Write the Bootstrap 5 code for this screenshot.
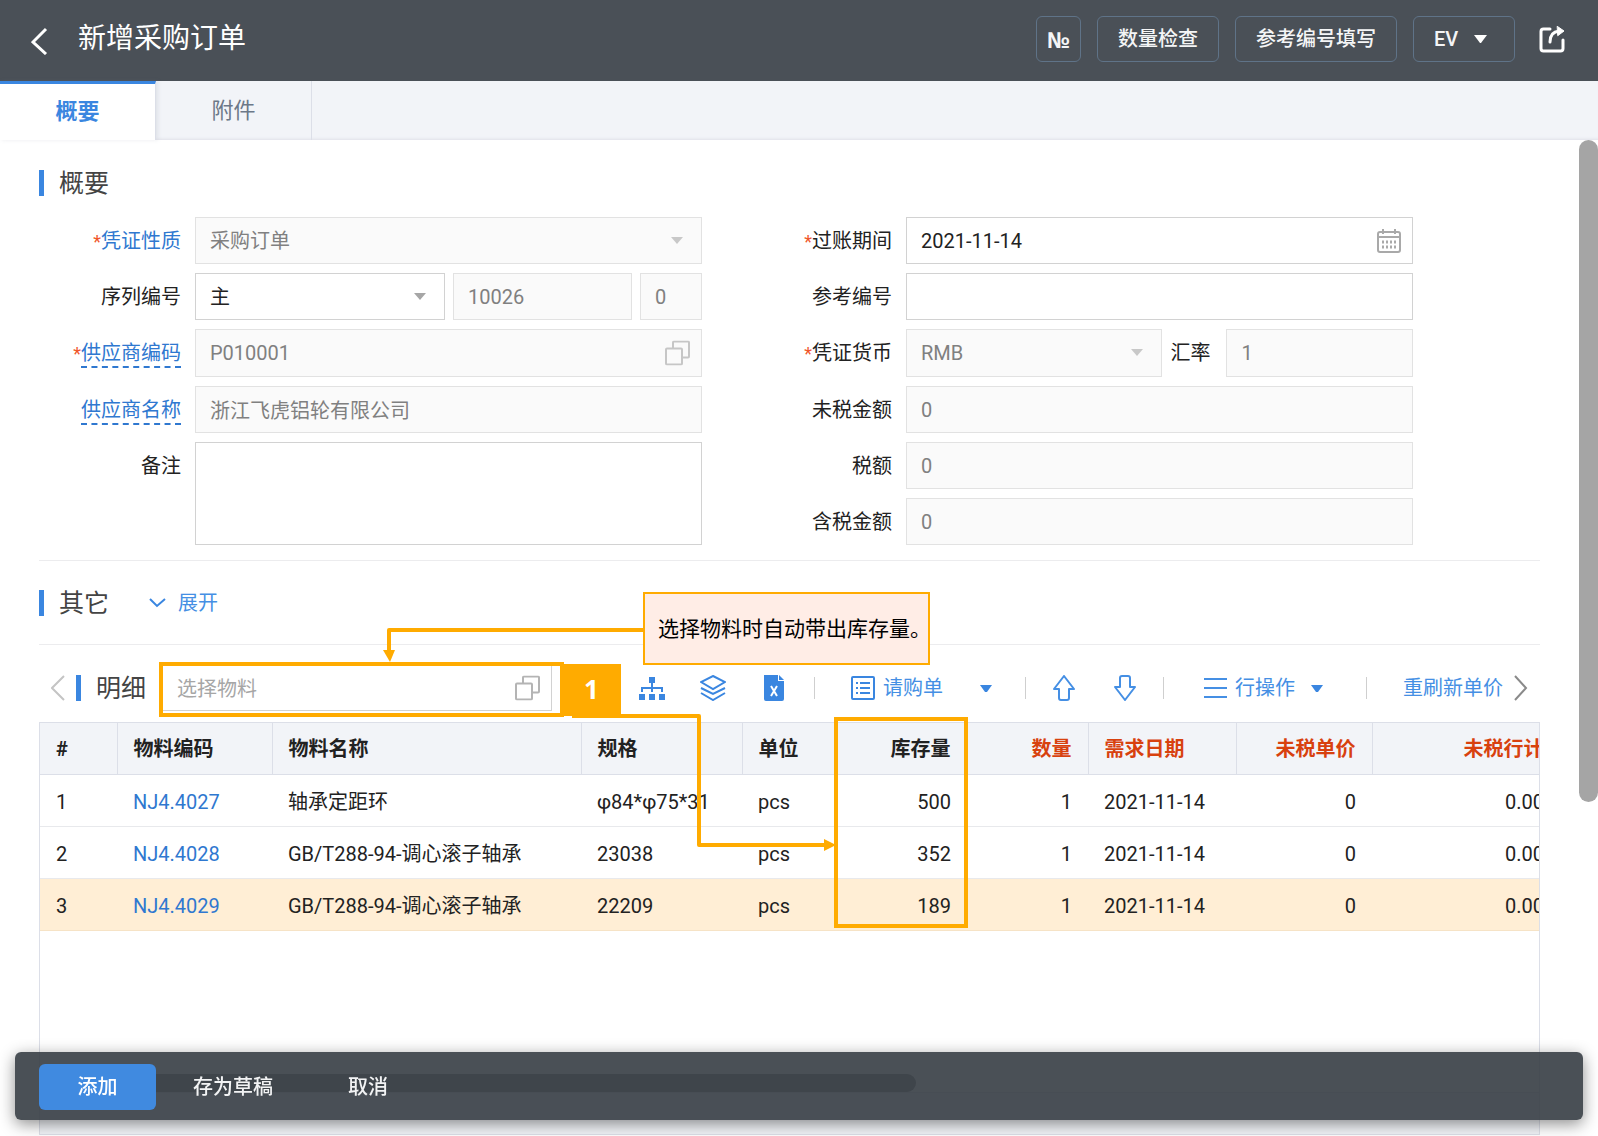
<!DOCTYPE html>
<html lang="zh-CN">
<head>
<meta charset="utf-8">
<meta name="viewport" content="width=device-width, initial-scale=1">
<title>新增采购订单</title>
<link href="https://cdn.jsdelivr.net/npm/bootstrap@5.3.0/dist/css/bootstrap.min.css" rel="stylesheet">
<style>
  :root { --blue: #3a86e0; --link: #2f78d0; --line: #dcdfe8; --note: #ffab00; }
  body { font-family: Roboto, "Noto Sans CJK SC", sans-serif; font-size: 20px; line-height: 28px; color: #222; background: #fff; }
  svg { display: block; flex: none; fill: none; }

  /* header */
  .app-head { height: 81px; background: #4a5057; padding: 0 33px 0 31px; color: #fff; }
  .app-title { font-size: 28px; line-height: 36px; font-weight: 400; margin: 0 0 0 30px; }
  .head-actions { gap: 16px; }
  .head-btn { height: 46px; padding: 0 20px; font-size: 20px; line-height: 28px; font-weight: 500; color: #f4f5f6; border: 1px solid #5f7388; border-radius: 6px; background: transparent; }
  .head-no { width: 45px; padding: 0; font: 700 22px/28px "Open Sans", "Noto Sans", sans-serif; }
  .head-user { width: 102px; }
  .plain { border: 0; background: none; padding: 0; color: inherit; }

  /* tabs */
  .page-tabs { height: 59px; background: #f2f4f8; box-shadow: inset 0 -3px 3px -2px #dfe1e8; flex-wrap: nowrap; border: 0; }
  .page-tabs .nav-link { width: 156px; height: 59px; padding: 0; border: 0; border-right: 1px solid var(--line); border-radius: 0; font-size: 22px; line-height: 60px; text-align: center; color: #6c7888; }
  .page-tabs .nav-link.active { color: var(--blue); background: #fff; border-top: 3px solid var(--blue); line-height: 56px; font-weight: 700; box-shadow: 2px 0 4px rgba(120, 130, 150, .15); }

  /* page body */
  .page-body { min-height: 0; }
  .panel-col { padding: 0 39px 1px; min-width: 0; }
  .rail { width: 19px; flex: none; }
  .rail-thumb { height: 662px; border-radius: 10px; background: #a5a5a5; }
  .sect { border-bottom: 1px solid #ececee; }
  .sect-main { padding: 30px 0 15px; }
  .sect-other { padding: 29px 0 28px; }
  .sect-title { font-size: 25px; line-height: 28px; height: 26px; font-weight: 400; margin: 0; color: #444; display: flex; }
  .sect-title::before { content: ""; width: 5px; height: 26px; margin-right: 15px; background: var(--blue); }
  .expand { color: #458fe4; text-decoration: none; line-height: 28px; margin: -1px 0 -1px 40px; }

  /* form */
  .form-area { margin-top: 21px; padding-right: 127px; }
  .form-side { display: grid; grid-template-rows: repeat(6, 1fr); row-gap: 9px; height: 328px; flex: 1 1 663px; min-width: 0; }
  .form-side.right { flex-basis: 711px; }
  .form-side .item { display: flex; min-height: 0; }
  .form-side .tall { grid-row: span 2; }
  .form-side .item > label { width: 156px; flex: none; padding: 10px 14px 0 0; text-align: right; }
  .form-side.right .item > label { width: 204px; }
  .req::before { content: "*"; color: #f0562b; font-size: 18px; }
  .lk { color: var(--link); }
  .dash { border-bottom: 2px dashed var(--link); display: inline-block; line-height: 25px; }
  .form-control, .form-select { height: 100%; padding: 1px 14px 0; font-size: 20px; line-height: 28px; border: 1px solid #d2d2d2; border-radius: 0; color: #222; background-color: #fff; min-width: 0; }
  .form-select { --bs-form-select-bg-img: url("data:image/svg+xml,%3csvg xmlns='http://www.w3.org/2000/svg' viewBox='0 0 12 7'%3e%3cpath fill='%23a6a6a6' d='M0 0h12L6 7z'/%3e%3c/svg%3e"); background-size: 12px 7px; background-position: right 18px center; }
  .form-control:disabled, .form-select:disabled { background-color: #fafafa; border-color: #e2e2e2; color: #808080; opacity: 1; }
  .form-select:disabled { --bs-form-select-bg-img: url("data:image/svg+xml,%3csvg xmlns='http://www.w3.org/2000/svg' viewBox='0 0 12 7'%3e%3cpath fill='%23c8c8c8' d='M0 0h12L6 7z'/%3e%3c/svg%3e"); }
  textarea.form-control { resize: none; }
  .w-serial { flex: 1 1 250px; } .w-number { flex: 1 1 179px; } .w-index { flex: 1 1 62px; }
  .w-money { flex: 1 1 257px; } .w-rate { flex: 1 1 187px; }
  .in-icon { position: absolute; right: 12px; top: 50%; transform: translateY(-50%); }

  /* detail toolbar */
  .detail { position: relative; min-height: 0; }
  .tools { padding: 20px 12px 11px; color: #458fe4; white-space: nowrap; }
  .tools .sect-title { margin-left: 11px; }
  .pick { position: relative; width: 390px; height: 46px; margin-left: 16px; flex: none; }
  .pick .form-control::placeholder { color: #a6a6a6; }
  .icon-set { gap: 35px; margin-left: 87px; }
  .arrow-set { gap: 39px; }
  .tool-sep { width: 1px; height: 22px; background: #cfcfcf; flex: none; margin: 0 27px; }
  .tool-btn { display: flex; align-items: center; gap: 8px; padding: 0 6px 0 9px; flex: none; }
  .tool-btn .far { margin-left: 29px; }
  .tool-btn .near { margin-left: 8px; }

  /* table */
  .grid-box { border: 1px solid var(--line); min-height: 0; overflow: hidden; }
  .grid-table { table-layout: fixed; width: 1520px; margin: 0; --bs-table-bg: transparent; --bs-table-color: #222; }
  .grid-table th, .grid-table td { height: 52px; padding: 3px 16px 0; vertical-align: middle; border-bottom: 1px solid #e8e9ec; white-space: nowrap; }
  .grid-table th { background: #f2f4f8; border-right: 1px solid var(--line); border-bottom-color: var(--line); color: #222; height: 51px; padding-top: 2px; }
  .grid-table .hot { color: #d8410e; }
  .grid-table .sel td { background: #ffeed5; border-bottom-color: #f6e3c6; }
  .grid-table a { color: var(--link); text-decoration: none; }
  .h-thumb { width: 876px; height: 18px; border-radius: 9px; background: #8c8c8c; }
  .grid-foot { height: 42px; background: #f2f4f8; border-top: 1px solid var(--line); }

  /* action bar */
  .act-bar { position: fixed; left: 15px; right: 15px; bottom: 16px; height: 68px; padding: 1px 24px 0; border-radius: 6px; background: rgba(54, 61, 68, .9); box-shadow: 0 4px 16px rgba(0, 0, 0, .45); color: #f2f3f4; font-weight: 500; }
  .act-bar .btn-primary { width: 117px; height: 46px; font-size: 20px; line-height: 28px; border-radius: 6px; border: 0; background: #408ae0; padding: 0; font-weight: 500; }
  .act-bar .act-draft { width: 154px; font-weight: 500; }
  .act-bar .act-cancel { width: 116px; font-weight: 500; }

  /* annotations over the detail area */
  .note-layer { position: absolute; left: 0; top: 0; pointer-events: none; }
  .note-frame { position: absolute; border: 4px solid var(--note); }
  .frame-pick { left: 120px; top: 17px; width: 405px; height: 55px; }
  .frame-stock { left: 795px; top: 72px; width: 134px; height: 211px; }
  .note-num { position: absolute; left: 523px; top: 19px; width: 59px; height: 52px; background: var(--note); color: #fff; font: 700 26px/50px "Open Sans", sans-serif; text-align: center; }
  .note-tip { position: absolute; left: 604px; top: -53px; width: 287px; height: 73px; padding: 0 13px; border: 2px solid var(--note); background: #ffede6; color: #000; font-size: 21px; line-height: 71px; white-space: nowrap; }
  .note-lines { position: absolute; left: 343px; top: -20px; }
</style>
</head>
<body class="d-flex flex-column vh-100 overflow-hidden">

<header class="app-head d-flex align-items-center">
  <button class="plain" type="button" aria-label="返回"><svg width="17" height="28" viewBox="0 0 17 28" stroke="#fff" stroke-width="3"><path d="M15 2 2 15l13 12"/></svg></button>
  <h1 class="app-title mb-1">新增采购订单</h1>
  <div class="head-actions d-flex align-items-center ms-auto mb-1">
    <button class="head-btn head-no" type="button">№</button>
    <button class="head-btn" type="button">数量检查</button>
    <button class="head-btn" type="button">参考编号填写</button>
    <button class="head-btn head-user d-flex align-items-center" type="button">EV<svg class="ms-3" width="13" height="8"><path d="M0 0h13L7 8H6z" fill="#fff"/></svg></button>
    <button class="plain ms-2" type="button" aria-label="分享"><svg width="26" height="28" viewBox="0 0 26 28" stroke="#fff" stroke-width="3" stroke-linecap="round"><path d="M11 4H4.500Q2 4 2 6.500v17Q2 26 4.500 26h17q2.500 0 2.500-2.500V15"/><path d="M11 17q0-10 9-11"/><path d="M18.500 1.500 25 6l-6 4.500z" fill="#fff" stroke-width="1"/></svg></button>
  </div>
</header>

<nav class="nav page-tabs">
  <a class="nav-link active" href="#">概要</a>
  <a class="nav-link" href="#">附件</a>
</nav>

<main class="page-body d-flex flex-grow-1">
  <div class="panel-col d-flex flex-column flex-grow-1">

    <section class="sect sect-main">
      <h2 class="sect-title">概要</h2>
      <div class="form-area d-flex">
        <div class="form-side">
          <div class="item"><label for="kind" class="req lk">凭证性质</label><select id="kind" class="form-select" disabled><option>采购订单</option></select></div>
          <div class="item"><label for="serial">序列编号</label>
            <div class="d-flex gap-2 flex-grow-1">
              <select id="serial" class="form-select w-serial"><option>主</option></select>
              <input class="form-control w-number" value="10026" aria-label="编号" disabled>
              <input class="form-control w-index" value="0" aria-label="子号" disabled>
            </div>
          </div>
          <div class="item"><label for="vcode" class="req lk"><span class="dash">供应商编码</span></label>
            <div class="position-relative flex-grow-1"><input id="vcode" class="form-control" value="P010001" disabled>
              <svg class="in-icon" width="25" height="25" stroke="#c6c6c6" stroke-width="2"><rect x="1" y="8" width="16" height="16" rx="1"/><path d="M8 8V2q0-1 1-1h14q1 0 1 1v14q0 1-1 1h-6"/></svg></div>
          </div>
          <div class="item"><label for="vname" class="lk"><span class="dash">供应商名称</span></label><input id="vname" class="form-control" value="浙江飞虎铝轮有限公司" disabled></div>
          <div class="item tall"><label for="memo">备注</label><textarea id="memo" class="form-control"></textarea></div>
        </div>
        <div class="form-side right">
          <div class="item"><label for="period" class="req">过账期间</label>
            <div class="position-relative flex-grow-1"><input id="period" class="form-control" value="2021-11-14">
              <svg class="in-icon" width="24" height="24" stroke="#a9a9a9" stroke-width="2"><rect x="1" y="3" width="22" height="20" rx="2"/><path d="M1 8h22M6 0v5M18 0v5"/><path d="M5 13h14M5 18h14" stroke-width="3" stroke-dasharray="2 2"/></svg></div>
          </div>
          <div class="item"><label for="refno">参考编号</label><input id="refno" class="form-control"></div>
          <div class="item"><label for="money" class="req">凭证货币</label>
            <div class="d-flex flex-grow-1">
              <select id="money" class="form-select w-money" disabled><option>RMB</option></select>
              <label for="rate" class="flex-shrink-0 ps-2 pe-3 align-self-center">汇率</label>
              <input id="rate" class="form-control w-rate" value="1" disabled>
            </div>
          </div>
          <div class="item"><label for="net">未税金额</label><input id="net" class="form-control" value="0" disabled></div>
          <div class="item"><label for="tax">税额</label><input id="tax" class="form-control" value="0" disabled></div>
          <div class="item"><label for="gross">含税金额</label><input id="gross" class="form-control" value="0" disabled></div>
        </div>
      </div>
    </section>

    <section class="sect sect-other d-flex align-items-center">
      <h2 class="sect-title">其它</h2>
      <a href="#" class="expand d-flex align-items-center gap-2"><svg class="me-1" width="17" height="10" stroke="#3a86e0" stroke-width="2"><path d="M1 1l7 7 8-7"/></svg>展开</a>
    </section>

    <section class="detail d-flex flex-column flex-grow-1">
      <div class="tools d-flex align-items-center">
        <button class="plain" type="button" aria-label="向左"><svg width="14" height="26" stroke="#c4c4c4" stroke-width="2"><path d="M13 1 1 13l12 12"/></svg></button>
        <h2 class="sect-title">明细</h2>
        <div class="pick">
          <input class="form-control" placeholder="选择物料" aria-label="选择物料">
          <svg class="in-icon" width="25" height="25" stroke="#b4b4b4" stroke-width="2"><rect x="1" y="8" width="16" height="16" rx="1"/><path d="M8 8V2q0-1 1-1h14q1 0 1 1v14q0 1-1 1h-6"/></svg>
        </div>
        <div class="icon-set d-flex">
          <button class="plain" type="button" aria-label="物料树"><svg width="26" height="26"><g fill="#3a86e0"><rect x="10" y="2" width="6" height="6"/><rect x="0" y="19" width="6" height="6"/><rect x="10" y="19" width="6" height="6"/><rect x="20" y="19" width="6" height="6"/></g><path d="M13 8v9M3 17v-4h20v4" stroke="#3a86e0" stroke-width="2"/></svg></button>
          <button class="plain" type="button" aria-label="层级"><svg width="26" height="26" stroke="#3a86e0" stroke-width="2"><path d="M13 1 25 7l-12 7L1 7zM1 13l12 6 12-6M1 18l12 7 12-7"/></svg></button>
          <button class="plain" type="button" aria-label="Excel 导入"><svg width="26" height="26"><path d="M3 0h14v6h6v18q0 2-2 2H5q-2 0-2-2z" fill="#3a86e0"/><path d="M18 0l5 5h-5z" fill="#3a86e0"/><path d="M10 11l6 10M16 11l-6 10" stroke="#fff" stroke-width="2"/></svg></button>
        </div>
        <span class="tool-sep"></span>
        <button class="plain tool-btn" type="button"><svg width="24" height="26" stroke="#3a86e0" stroke-width="2"><rect x="1" y="2" width="22" height="22" rx="1"/><path d="M5 8h2M9 8h10M5 13h2M9 13h10M5 18h2M9 18h10"/></svg>请购单<svg class="far" width="12" height="7"><path d="M0 0h12L7 7H5z" fill="#3a86e0"/></svg></button>
        <span class="tool-sep"></span>
        <div class="arrow-set d-flex">
          <button class="plain" type="button" aria-label="上移"><svg width="22" height="26" stroke="#458fe4" stroke-width="2" stroke-linejoin="round"><path d="M11 1 21 14h-5v9q0 2-2 2H8q-2 0-2-2v-9H1z"/></svg></button>
          <button class="plain" type="button" aria-label="下移"><svg width="22" height="26" stroke="#458fe4" stroke-width="2" stroke-linejoin="round"><path d="M11 25 21 12h-5V3q0-2-2-2H8Q6 1 6 3v9H1z"/></svg></button>
        </div>
        <span class="tool-sep"></span>
        <button class="plain tool-btn pe-3" type="button"><svg class="ms-1" width="23" height="20" stroke="#458fe4" stroke-width="2"><path d="M0 1h23M0 10h23M0 19h23"/></svg>行操作<svg class="near" width="12" height="7"><path d="M0 0h12L7 7H5z" fill="#3a86e0"/></svg></button>
        <span class="tool-sep"></span>
        <button class="plain tool-btn" type="button">重刷新单价</button>
        <button class="plain ms-auto" type="button" aria-label="向右"><svg width="14" height="26" stroke="#8a8a8a" stroke-width="2"><path d="M1 1l11 12L1 25"/></svg></button>
      </div>

      <div class="grid-box d-flex flex-column flex-grow-1">
        <table class="table grid-table">
          <colgroup><col style="width:77px"><col style="width:155px"><col style="width:309px"><col style="width:161px"><col style="width:93px"><col style="width:132px"><col style="width:121px"><col style="width:148px"><col style="width:136px"><col style="width:188px"></colgroup>
          <thead><tr><th>#</th><th>物料编码</th><th>物料名称</th><th>规格</th><th>单位</th><th class="text-end">库存量</th><th class="text-end hot">数量</th><th class="hot">需求日期</th><th class="text-end hot">未税单价</th><th class="text-end hot">未税行计</th></tr></thead>
          <tbody>
            <tr><td>1</td><td><a href="#">NJ4.4027</a></td><td>轴承定距环</td><td>φ84*φ75*31</td><td>pcs</td><td class="text-end">500</td><td class="text-end">1</td><td>2021-11-14</td><td class="text-end">0</td><td class="text-end">0.00</td></tr>
            <tr><td>2</td><td><a href="#">NJ4.4028</a></td><td>GB/T288-94-调心滚子轴承</td><td>23038</td><td>pcs</td><td class="text-end">352</td><td class="text-end">1</td><td>2021-11-14</td><td class="text-end">0</td><td class="text-end">0.00</td></tr>
            <tr class="sel"><td>3</td><td><a href="#">NJ4.4029</a></td><td>GB/T288-94-调心滚子轴承</td><td>22209</td><td>pcs</td><td class="text-end">189</td><td class="text-end">1</td><td>2021-11-14</td><td class="text-end">0</td><td class="text-end">0.00</td></tr>
          </tbody>
        </table>
        <div class="h-thumb mt-auto flex-shrink-0"></div>
        <div class="grid-foot flex-shrink-0"></div>
      </div>

      <div class="note-layer">
        <svg class="note-lines" width="460" height="230" stroke="#ffab00" stroke-width="4" stroke-linejoin="round"><path d="M261 5H7v22"/><path d="M1 25h12L8 37z" fill="#ffab00" stroke="none"/><path d="M190 91h127v129h126"/><path d="M442 214v12l12-6z" fill="#ffab00" stroke="none"/></svg>
        <div class="note-frame frame-pick"></div>
        <div class="note-num">1</div>
        <div class="note-frame frame-stock"></div>
        <div class="note-tip">选择物料时自动带出库存量。</div>
      </div>
    </section>
  </div>
  <div class="rail"><div class="rail-thumb"></div></div>
</main>

<footer class="act-bar d-flex align-items-center">
  <button class="btn btn-primary" type="button">添加</button>
  <button class="plain act-draft" type="button">存为草稿</button>
  <button class="plain act-cancel" type="button">取消</button>
</footer>

<script src="https://cdn.jsdelivr.net/npm/bootstrap@5.3.0/dist/js/bootstrap.bundle.min.js"></script>
</body>
</html>
